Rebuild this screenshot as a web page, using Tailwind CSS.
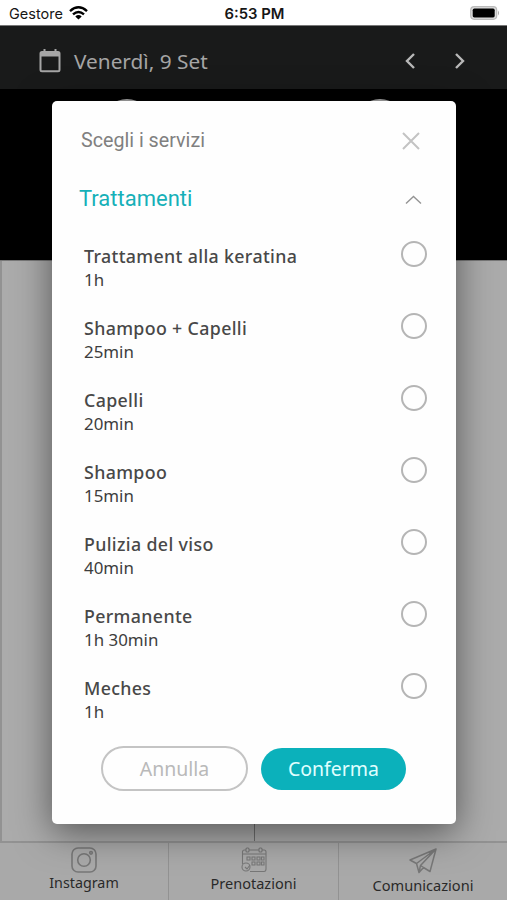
<!DOCTYPE html>
<html lang="it">
<head>
<meta charset="utf-8">
<title>Prenotazioni</title>
<script src="https://cdn.jsdelivr.net/npm/@tailwindcss/browser@4"></script>
</head>
<body class="bg-[#ababab] font-['Noto_Sans',sans-serif]">
<div class="relative flex h-[900px] w-[507px] flex-col overflow-hidden">
  <div class="grid h-[26px] shrink-0 grid-cols-3 items-center border-b border-[#777] bg-white pt-[2px] pl-[9px] pr-[7px] font-[Inter,sans-serif] text-[#161616]">
    <div class="flex items-center gap-[6px] text-[14.5px] leading-5"><span>Gestore</span>
      <svg class="-mt-[2px] h-[14px] w-[19px]" viewBox="0 0 19 14" fill="none" stroke="#000" stroke-width="2.4"><path d="M1 5.1Q9.5-2.5 18 5.1M4 8.4Q9.5 3.5 15 8.4"/><path d="M6.3 10.4Q9.5 7.8 12.7 10.4L9.5 13.6Z" fill="#000" stroke="none"/></svg>
    </div>
    <div class="text-center text-[14.8px] leading-5 font-semibold">6:53 PM</div>
    <div class="-mt-[2px] flex justify-end"><svg class="h-[14px] w-[30px]" viewBox="0 0 30 14"><rect x=".7" y=".7" width="26" height="12.6" rx="3.5" fill="#ddd" stroke="#bbb" stroke-width="1.2"/><rect x="2.7" y="2.6" width="22" height="8.8" rx="1.6"/><path d="M28 4.5Q30 7 28 9.5Z" fill="#aaa"/></svg></div>
  </div>
  <header class="flex h-[63px] shrink-0 items-center bg-[#191a1a] pl-[39px] pr-[41px] text-[#a5a5a5]">
    <svg class="mt-[7px] h-[24px] w-[22px]" viewBox="0 0 22 24" fill="none" stroke="#a5a5a5" stroke-width="2"><rect x="1.5" y="3" width="19" height="19.3" rx="1.5"/><path d="M1 5.5H21" stroke-width="4"/><path d="M5.5 0V4M16.500 0V4"/></svg>
    <span class="mt-[7px] ml-[13px] text-[20.8px] leading-7">Venerdì, 9 Set</span>
    <div class="mt-[7px] ml-auto flex gap-[38px]">
      <svg class="h-4 w-[12px]" viewBox="0 0 12 16" fill="none" stroke="#b8b8b8" stroke-width="2.4"><path d="M10 1L3 8L10 15"/></svg>
      <svg class="h-4 w-[12px]" viewBox="0 0 12 16" fill="none" stroke="#b8b8b8" stroke-width="2.4"><path d="M2 1L9 8L2 15"/></svg>
    </div>
  </header>
  <div class="flex h-[171px] shrink-0 justify-around bg-black pt-[10px]">
    <div class="h-12 w-12 rounded-full bg-[#aaa]"></div><div class="h-12 w-12 rounded-full bg-[#aaa]"></div>
  </div>
  <main class="grid flex-1 grid-cols-[255px_1fr] border-t border-[#777] bg-[#ababab]"><div class="border-r border-l-2 border-r-[#6e6e6e] border-l-[#929292]"></div><div></div></main>
  <nav class="grid h-[59px] shrink-0 grid-cols-[169px_170px_1fr] border-t-2 border-[#929292] bg-[#a9a9a9] text-[14.8px] leading-5 text-[#292929]">
    <div class="flex flex-col items-center border-r border-[#929292] pt-[4px]">
      <svg class="h-[26px] w-[26px]" viewBox="0 0 26 26" fill="none" stroke="#777" stroke-width="1.6"><rect x="1" y="1" width="24" height="24" rx="6"/><circle cx="13" cy="13" r="6.3"/><circle cx="20" cy="5.8" r="1.3"/></svg>
      <span class="text-[14.3px]">Instagram</span>
    </div>
    <div class="flex flex-col items-center border-r border-[#929292] pt-[4px]">
      <svg class="h-[26px] w-[26px]" viewBox="0 0 26 26" fill="none" stroke="#777" stroke-width="1.1"><path d="M1.500 17V5Q1.500 3 3.500 3H5M8 3H18M21 3H23Q25 3 25 5V22Q25 24.500 23 24.500H9M1.500 7H25"/><rect x="5" y="1" width="3" height="4" rx="1"/><rect x="18" y="1" width="3" height="4" rx="1"/><path d="M6 10h3v3H6zM11 10h3v3h-3zM16 10h3v3h-3zM20.500 10h2.500v3h-2.500zM11 15h3v3h-3zM16 15h3v3h-3zM20.500 15h2.500v3h-2.500zM4 20l2 2 3-4"/><circle cx="5" cy="20" r="4"/></svg>
      <span class="text-[14.5px]">Prenotazioni</span>
    </div>
    <div class="flex flex-col items-center pt-[5px]">
      <svg class="h-[26px] w-[28px]" viewBox="0 0 28 26" fill="none" stroke="#777" stroke-width="1.5" stroke-linejoin="round"><path d="M27 1L1 12L7.500 15.500L10 24.500L14.500 19.500L21 23.500ZM27 1L7.500 15.500M27 1L11.500 17.500L10 24.500M11.500 17.500L14.500 19.500"/></svg>
      <span class="mt-px text-[14.6px]">Comunicazioni</span>
    </div>
  </nav>

  <section class="absolute top-[101px] left-[52px] flex h-[723px] w-[404px] flex-col rounded-[5px] bg-[#fefefe] shadow-[0_8px_36px_rgba(0,0,0,0.5)]">
    <div class="flex h-[79px] shrink-0 items-center justify-between pl-[29px] pr-[36px] font-[Roboto,sans-serif] text-[19.7px] text-[#808080]">
      <span>Scegli i servizi</span>
      <svg class="h-[18px] w-[18px]" viewBox="0 0 18 18" stroke="#c3c3c3" stroke-width="2"><path d="M1 1L17 17M17 1L1 17"/></svg>
    </div>
    <div class="flex h-[37px] shrink-0 items-center justify-between pl-[27px] pr-[34px] font-[Roboto,sans-serif] text-[22px] text-[#16b0b8]">
      <span>Trattamenti</span>
      <svg class="mt-[3px] h-[10px] w-[17px]" viewBox="0 0 17 10" fill="none" stroke="#949494" stroke-width="1.4"><path d="M1 8.500L8.500 1.500L16 8.500"/></svg>
    </div>
    <ul id="services" class="h-[529px] shrink-0 pt-[27px] pl-[32px] pr-[29px]"></ul>
    <div class="flex items-center gap-[13px] pl-[49px] text-[19.5px]">
      <button class="h-[45px] w-[147px] rounded-full border-2 border-[#c4c4c4] text-[#b9b9b9]">Annulla</button>
      <button class="h-[42px] w-[145px] rounded-full bg-[#0bb1bb] text-[#e0ffff]">Conferma</button>
    </div>
  </section>
</div>
<script>
  const services = [['Trattament alla keratina','1h'],['Shampoo + Capelli','25min'],['Capelli','20min'],['Shampoo','15min'],['Pulizia del viso','40min'],['Permanente','1h 30min'],['Meches','1h']];
  document.getElementById('services').innerHTML = services.map(([name, time]) => `
    <li class="flex h-[72px] items-start justify-between">
      <div class="text-[17.8px] leading-6"><div class="font-medium tracking-[0.35px] text-[#484848]">${name}</div><div class="text-[16.9px] text-[#3d3d3d]">${time}</div></div>
      <span class="-mt-[3px] h-[26px] w-[26px] rounded-full border-2 border-[#b5b5b5]"></span>
    </li>`).join('');
</script>
</body>
</html>
